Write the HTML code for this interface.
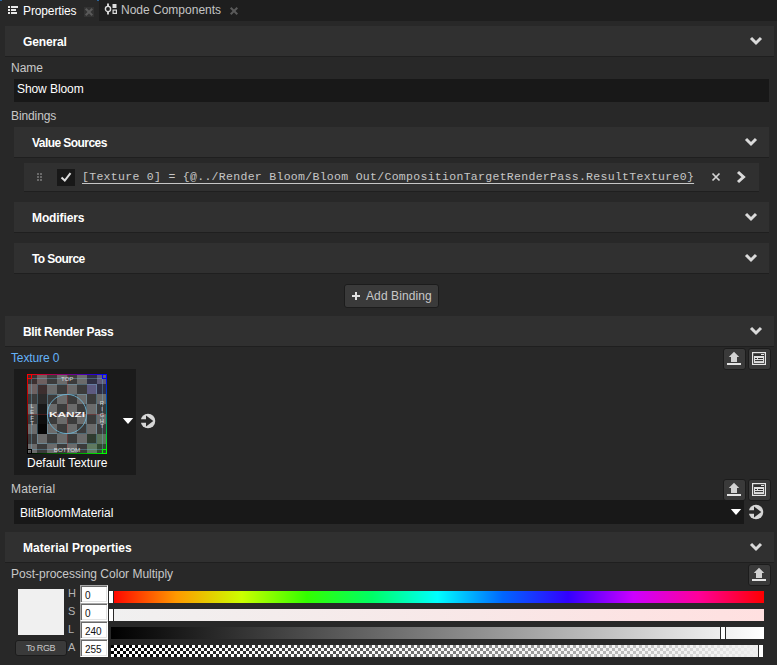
<!DOCTYPE html>
<html>
<head>
<meta charset="utf-8">
<title>Properties</title>
<style>
html,body{margin:0;padding:0;background:#282828;}
body{width:777px;height:665px;overflow:hidden;background:#282828;position:relative;
 font-family:"Liberation Sans",sans-serif;font-size:12px;color:#c8c8c8;}
.a{position:absolute;}
.t{position:absolute;white-space:nowrap;line-height:14px;height:14px;}
.hd{position:absolute;background:#303030;border-bottom:1px solid #1f1f1f;height:30px;}
.hd b{position:absolute;top:9px;line-height:14px;color:#ffffff;font-weight:bold;white-space:nowrap;}
.chev{position:absolute;width:14px;height:10px;}
.inp{position:absolute;background:#181818;}
.btn{position:absolute;box-sizing:border-box;background:#3a3a3a;border:1px solid #1c1c1c;border-radius:3px;}
.num{position:absolute;box-sizing:border-box;left:80px;width:28px;height:18px;background:#ffffff;
 border:1px solid;border-color:#a8a8a8 #ffffff #ffffff #a8a8a8;box-shadow:inset 1px 1px 0 #6a6a6a,inset -1px -1px 0 #e3e3e3;}
.num span{position:absolute;left:4px;top:5px;font-size:10px;line-height:10px;color:#111;}
.lab{position:absolute;left:68px;font-size:11px;line-height:12px;color:#b4b4b4;}
.bar{position:absolute;left:111px;width:653px;height:12px;}
.thumb{position:absolute;width:4px;height:12px;background:#ffffff;border-left:1px solid #282828;border-right:1px solid #282828;}
</style>
</head>
<body>

<!-- tab bar -->
<div class="a" style="left:0;top:0;width:777px;height:21px;background:#1e1e1e;"></div>
<div class="a" style="left:0px;top:0;width:99px;height:21px;background:#282828;"></div>
<div class="a" style="left:0;top:0;width:2px;height:1px;background:#2a7fd0;opacity:.7;"></div>
<div class="a" style="left:97px;top:0;width:2px;height:1px;background:#2a7fd0;opacity:.7;"></div>
<svg class="a" style="left:7px;top:5px;" width="12" height="10" viewBox="0 0 12 10">
 <g fill="#e8e8e8"><rect x="1" y="1" width="2" height="2"/><rect x="4" y="1" width="7" height="2"/>
 <rect x="1" y="4" width="2" height="2"/><rect x="4" y="4" width="5" height="2"/>
 <rect x="1" y="7" width="2" height="2"/><rect x="4" y="7" width="6" height="2"/></g>
</svg>
<div class="t" id="tProperties" style="letter-spacing:-0.12px;left:23px;top:4px;color:#ffffff;">Properties</div>
<div class="a" style="left:84px;top:7px;width:10px;height:10px;background:#333333;"></div>
<svg class="a" style="left:84px;top:7px;" width="10" height="10" viewBox="0 0 10 10"><path d="M1.7 1.7L8.3 8.3M8.3 1.7L1.7 8.3" stroke="#5a5a5a" stroke-width="2" fill="none"/></svg>
<svg class="a" style="left:104px;top:3px;" width="14" height="12" viewBox="0 0 14 12">
 <g fill="none" stroke="#dcdcdc"><circle cx="4" cy="6" r="2.6" stroke-width="1.4"/><path d="M4 0.6V3.4M4 8.6V11.4" stroke-width="1.9"/></g>
 <rect x="8.5" y="1" width="4" height="4" fill="#dcdcdc"/>
 <rect x="9.1" y="7.1" width="3.3" height="3.3" fill="none" stroke="#dcdcdc" stroke-width="1.2"/>
</svg>
<div class="t" id="tNode" style="left:121px;top:3px;color:#c4c4c4;">Node Components</div>
<svg class="a" style="left:229px;top:6px;" width="10" height="10" viewBox="0 0 10 10"><path d="M1.7 1.7L8.3 8.3M8.3 1.7L1.7 8.3" stroke="#5a5a5a" stroke-width="2" fill="none"/></svg>

<!-- General -->
<div class="hd" style="left:5px;top:26px;width:769px;"><b id="tGeneral" style="letter-spacing:-0.14px;left:18px;">General</b></div>
<svg class="chev" style="left:749px;top:36px;" viewBox="0 0 14 10"><path d="M2 2L7 7L12 2" stroke="#dadada" stroke-width="3" fill="none"/></svg>
<div class="t" id="tName" style="left:11px;top:61px;">Name</div>
<div class="inp" style="left:14px;top:79px;width:755px;height:23px;"></div>
<div class="t" id="tShow" style="letter-spacing:-0.08px;left:17px;top:82px;color:#ffffff;">Show Bloom</div>
<div class="t" id="tBindings" style="letter-spacing:-0.1px;left:11px;top:109px;">Bindings</div>

<!-- Value Sources -->
<div class="hd" style="left:14px;top:127px;width:755px;"><b id="tValue" style="letter-spacing:-0.56px;left:18px;">Value Sources</b></div>
<svg class="chev" style="left:744px;top:137px;" viewBox="0 0 14 10"><path d="M2 2L7 7L12 2" stroke="#dadada" stroke-width="3" fill="none"/></svg>

<div class="a" style="left:24px;top:163px;width:735px;height:28px;background:#303030;border-bottom:1px solid #1f1f1f;"></div>
<svg class="a" style="left:37px;top:173px;" width="5" height="8" viewBox="0 0 5 8"><g fill="#696969">
 <rect x="0" y="0" width="2" height="2"/><rect x="3" y="0" width="2" height="2"/>
 <rect x="0" y="3" width="2" height="2"/><rect x="3" y="3" width="2" height="2"/>
 <rect x="0" y="6" width="2" height="2"/><rect x="3" y="6" width="2" height="2"/></g></svg>
<div class="a" style="left:57px;top:169px;width:18px;height:17px;background:#181818;"></div>
<svg class="a" style="left:57px;top:168px;" width="18" height="18" viewBox="0 0 18 18"><path d="M4.5 9.5L7.8 12.6L13.5 5.2" stroke="#dcdcdc" stroke-width="2" fill="none"/></svg>
<div class="t" id="tMono" style="left:82px;top:170px;font-size:11.5px;letter-spacing:0.3px;font-family:'Liberation Mono',monospace;color:#c6c6c6;text-decoration:underline;text-underline-offset:3px;text-decoration-thickness:1px;">[Texture 0] = {@../Render Bloom/Bloom Out/CompositionTargetRenderPass.ResultTexture0}</div>
<svg class="a" style="left:711px;top:172px;" width="10" height="10" viewBox="0 0 10 10"><path d="M1.5 1.5L8.5 8.5M8.5 1.5L1.5 8.5" stroke="#d4d4d4" stroke-width="1.7" fill="none"/></svg>
<svg class="a" style="left:735px;top:170px;" width="12" height="14" viewBox="0 0 12 14"><path d="M3 2L8.5 7L3 12" stroke="#dadada" stroke-width="3" fill="none"/></svg>

<!-- Modifiers / To Source -->
<div class="hd" style="left:14px;top:202px;width:755px;"><b id="tMod" style="letter-spacing:-0.11px;left:18px;">Modifiers</b></div>
<svg class="chev" style="left:744px;top:212px;" viewBox="0 0 14 10"><path d="M2 2L7 7L12 2" stroke="#dadada" stroke-width="3" fill="none"/></svg>
<div class="hd" style="left:14px;top:243px;width:755px;"><b id="tToSrc" style="letter-spacing:-0.58px;left:18px;">To Source</b></div>
<svg class="chev" style="left:744px;top:253px;" viewBox="0 0 14 10"><path d="M2 2L7 7L12 2" stroke="#dadada" stroke-width="3" fill="none"/></svg>

<!-- Add Binding -->
<div class="btn" style="left:344px;top:284px;width:95px;height:24px;"></div>
<svg class="a" style="left:351px;top:291px;" width="10" height="10" viewBox="0 0 10 10"><path d="M5 1V9M1 5H9" stroke="#e0e0e0" stroke-width="2" fill="none"/></svg>
<div class="t" id="tAdd" style="left:366px;top:289px;color:#c8c8c8;letter-spacing:0.1px;">Add Binding</div>

<!-- Blit Render Pass -->
<div class="hd" style="left:5px;top:316px;width:769px;"><b id="tBlit" style="letter-spacing:-0.32px;left:18px;">Blit Render Pass</b></div>
<svg class="chev" style="left:749px;top:326px;" viewBox="0 0 14 10"><path d="M2 2L7 7L12 2" stroke="#dadada" stroke-width="3" fill="none"/></svg>
<div class="t" id="tTex0" style="letter-spacing:-0.13px;left:11px;top:351px;color:#64b2f8;">Texture 0</div>

<div class="btn" style="left:723px;top:348px;width:23px;height:22px;"></div>
<svg class="a" style="left:724px;top:349px;" width="21" height="20" viewBox="0 0 21 20"><path d="M10 2.7L15.2 8H13V13H7V8H4.8Z" fill="#d2d2d2"/><rect x="3" y="14" width="14" height="2" fill="#e4e4e4"/></svg>
<div class="btn" style="left:748px;top:348px;width:23px;height:22px;"></div>
<svg class="a" style="left:749px;top:349px;" width="21" height="20" viewBox="0 0 21 20"><rect x="3.6" y="3.6" width="12.8" height="11.8" fill="#2f2f2f" stroke="#e6e6e6" stroke-width="1.2"/><rect x="12" y="5" width="3" height="1" fill="#e6e6e6"/><rect x="5" y="7" width="10" height="7" fill="#e0e0e0"/><path d="M6 9.5H8M9 9.5H14M6 11.6H14" stroke="#2a2a2a" stroke-width="1" fill="none"/></svg>

<div class="a" style="left:14px;top:369px;width:122px;height:106px;background:#1b1b1b;"></div>
<svg class="a" id="thumbsvg" style="left:27px;top:374px;" width="80" height="80" viewBox="0 0 80 80">
<defs><linearGradient id="gT" x1="0" x2="1" y1="0" y2="0"><stop offset="0" stop-color="#ff0000"/><stop offset="1" stop-color="#0000ff"/></linearGradient><linearGradient id="gR" x1="0" x2="0" y1="0" y2="1"><stop offset="0" stop-color="#0000ff"/><stop offset="1" stop-color="#00ff00"/></linearGradient><linearGradient id="gB" x1="0" x2="1" y1="0" y2="0"><stop offset="0" stop-color="#000000"/><stop offset="1" stop-color="#00ff00"/></linearGradient><linearGradient id="gL" x1="0" x2="0" y1="0" y2="1"><stop offset="0" stop-color="#ff0000"/><stop offset="1" stop-color="#000000"/></linearGradient><radialGradient id="rR" cx="0" cy="0" r="1"><stop offset="0" stop-color="#ff2020" stop-opacity="0.22"/><stop offset="0.45" stop-color="#ff2020" stop-opacity="0.08"/><stop offset="1" stop-color="#ff2020" stop-opacity="0"/></radialGradient><radialGradient id="rB" cx="1" cy="0" r="1"><stop offset="0" stop-color="#3030ff" stop-opacity="0.30"/><stop offset="0.45" stop-color="#3030ff" stop-opacity="0.10"/><stop offset="1" stop-color="#3030ff" stop-opacity="0"/></radialGradient><radialGradient id="rG" cx="1" cy="1" r="1"><stop offset="0" stop-color="#20ff20" stop-opacity="0.30"/><stop offset="0.45" stop-color="#20ff20" stop-opacity="0.10"/><stop offset="1" stop-color="#20ff20" stop-opacity="0"/></radialGradient></defs>
<rect width="80" height="80" fill="#3b3b3b"/>
<path d="M10 0h10v10h-10zM30 0h10v10h-10zM50 0h10v10h-10zM70 0h10v10h-10zM0 10h10v10h-10zM20 10h10v10h-10zM40 10h10v10h-10zM60 10h10v10h-10zM10 20h10v10h-10zM30 20h10v10h-10zM50 20h10v10h-10zM70 20h10v10h-10zM0 30h10v10h-10zM20 30h10v10h-10zM40 30h10v10h-10zM60 30h10v10h-10zM10 40h10v10h-10zM30 40h10v10h-10zM50 40h10v10h-10zM70 40h10v10h-10zM0 50h10v10h-10zM20 50h10v10h-10zM40 50h10v10h-10zM60 50h10v10h-10zM10 60h10v10h-10zM30 60h10v10h-10zM50 60h10v10h-10zM70 60h10v10h-10zM0 70h10v10h-10zM20 70h10v10h-10zM40 70h10v10h-10zM60 70h10v10h-10z" fill="#6b6b6b"/>
<rect x="10" y="20" width="10" height="10" fill="#2c2c2c"/><rect x="10" y="30" width="10" height="10" fill="#191919"/><rect x="10" y="40" width="10" height="10" fill="#0e0e0e"/><rect x="10" y="50" width="10" height="10" fill="#060606"/>
<rect x="0" y="0" width="10" height="10" fill="#3b3030"/>
<rect x="10" y="0" width="10" height="10" fill="#6e6060"/>
<rect x="0" y="10" width="10" height="10" fill="#6e6262"/>
<rect x="10" y="10" width="10" height="10" fill="#3d2f2f"/>
<rect x="60" y="0" width="10" height="10" fill="#2f2f43"/>
<rect x="70" y="0" width="10" height="10" fill="#5f5b78"/>
<rect x="60" y="10" width="10" height="10" fill="#5d5a80"/>
<rect x="70" y="10" width="10" height="10" fill="#2f2f45"/>
<rect x="60" y="60" width="10" height="10" fill="#2f3b2f"/>
<rect x="70" y="60" width="10" height="10" fill="#5a725a"/>
<rect x="60" y="70" width="10" height="10" fill="#5f7a5f"/>
<rect x="70" y="70" width="10" height="10" fill="#304a30"/>
<g fill="none" stroke="#78bedc" stroke-opacity="0.35" stroke-width="1"><rect x="4.5" y="4.5" width="71" height="71"/><rect x="10.5" y="10.5" width="59" height="59"/><rect x="20.5" y="20.5" width="39" height="39"/></g>
<path d="M40.5 1V79M1 40.5H79" stroke="#c04040" stroke-opacity="0.3" stroke-width="1" fill="none"/>
<circle cx="40" cy="40" r="19.6" fill="none" stroke="#6fb6d6" stroke-opacity="0.85" stroke-width="1"/>
<rect x="0" y="0" width="80" height="1" fill="url(#gT)"/><rect x="79" y="0" width="1" height="80" fill="url(#gR)"/><rect x="0" y="79" width="80" height="1" fill="url(#gB)"/><rect x="0" y="0" width="1" height="80" fill="url(#gL)"/>
<g fill="none" stroke-width="1"><rect x="0.5" y="0.5" width="4" height="4" stroke="#ff0000"/><rect x="75.5" y="0.5" width="4" height="4" stroke="#0000ff"/><rect x="75.5" y="75.5" width="4" height="4" stroke="#00ff00"/><rect x="0.5" y="75.5" width="4" height="4" stroke="#000000"/></g>
<rect x="2" y="77" width="2" height="2" fill="#555"/>
<text x="40" y="43" text-anchor="middle" font-family="Liberation Sans, sans-serif" font-size="7" font-weight="bold" fill="#f0f0f0" textLength="36" lengthAdjust="spacingAndGlyphs">KANZI</text>
<text x="40.2" y="7.2" text-anchor="middle" font-family="Liberation Sans, sans-serif" font-size="6.2" fill="#e8e8e8" fill-opacity="0.9">TOP</text>
<text x="40" y="77.6" text-anchor="middle" font-family="Liberation Sans, sans-serif" font-size="6.2" fill="#e8e8e8" fill-opacity="0.9">BOTTOM</text>
<g font-family="Liberation Sans, sans-serif" font-size="6" fill="#e4e4e4" fill-opacity="0.85" text-anchor="middle"><text x="5.1" y="34">L</text><text x="5.1" y="39.8">E</text><text x="5.1" y="45.6">F</text><text x="5.1" y="51.4">T</text><text x="75" y="31.4">R</text><text x="75" y="37.1">I</text><text x="75" y="42.8">G</text><text x="75" y="48.5">H</text><text x="75" y="54.2">T</text></g>
</svg>
<div class="t" id="tDefTex" style="left:27px;top:456px;color:#ffffff;">Default Texture</div>
<svg class="a" style="left:122px;top:417px;" width="12" height="8" viewBox="0 0 12 8"><path d="M0.8 1H11.2L6 6.9Z" fill="#ffffff"/></svg>
<svg class="a" style="left:140px;top:413px;" width="16" height="16" viewBox="0 0 16 16"><circle cx="8" cy="8" r="7.25" fill="#d6d6d6"/><path d="M0 6.3H6V2.5L13.3 8L6 13.5V9.7H0Z" fill="#282828"/></svg>

<!-- Material -->
<div class="t" id="tMaterial" style="letter-spacing:0.2px;left:11px;top:482px;">Material</div>
<div class="btn" style="left:723px;top:479px;width:23px;height:22px;"></div>
<svg class="a" style="left:724px;top:480px;" width="21" height="20" viewBox="0 0 21 20"><path d="M10 2.7L15.2 8H13V13H7V8H4.8Z" fill="#d2d2d2"/><rect x="3" y="14" width="14" height="2" fill="#e4e4e4"/></svg>
<div class="btn" style="left:748px;top:479px;width:23px;height:22px;"></div>
<svg class="a" style="left:749px;top:480px;" width="21" height="20" viewBox="0 0 21 20"><rect x="3.6" y="3.6" width="12.8" height="11.8" fill="#2f2f2f" stroke="#e6e6e6" stroke-width="1.2"/><rect x="12" y="5" width="3" height="1" fill="#e6e6e6"/><rect x="5" y="7" width="10" height="7" fill="#e0e0e0"/><path d="M6 9.5H8M9 9.5H14M6 11.6H14" stroke="#2a2a2a" stroke-width="1" fill="none"/></svg>
<div class="inp" style="left:14px;top:500px;width:730px;height:24px;"></div>
<div class="t" id="tBBM" style="left:20px;top:506px;color:#ffffff;">BlitBloomMaterial</div>
<svg class="a" style="left:730px;top:508px;" width="12" height="8" viewBox="0 0 12 8"><path d="M0.8 1H11.2L6 6.9Z" fill="#ffffff"/></svg>
<svg class="a" style="left:748px;top:504px;" width="16" height="16" viewBox="0 0 16 16"><circle cx="8" cy="8" r="7.25" fill="#d6d6d6"/><path d="M0 6.3H6V2.5L13.3 8L6 13.5V9.7H0Z" fill="#282828"/></svg>

<!-- Material Properties -->
<div class="hd" style="left:5px;top:532px;width:769px;"><b id="tMatProp" style="letter-spacing:0.04px;left:18px;">Material Properties</b></div>
<svg class="chev" style="left:749px;top:542px;" viewBox="0 0 14 10"><path d="M2 2L7 7L12 2" stroke="#dadada" stroke-width="3" fill="none"/></svg>
<div class="t" id="tPost" style="left:11px;top:567px;">Post-processing Color Multiply</div>
<div class="btn" style="left:748px;top:564px;width:23px;height:22px;"></div>
<svg class="a" style="left:749px;top:565px;" width="21" height="20" viewBox="0 0 21 20"><path d="M10 2.7L15.2 8H13V13H7V8H4.8Z" fill="#d2d2d2"/><rect x="3" y="14" width="14" height="2" fill="#e4e4e4"/></svg>

<!-- colour editor -->
<div class="a" style="left:18px;top:589px;width:46px;height:46px;background:#f0f0f0;"></div>
<div class="btn" style="left:15px;top:640px;width:52px;height:16px;border-radius:3px;"></div>
<div class="t" id="tToRGB" style="left:26px;top:642px;font-size:9px;letter-spacing:-0.4px;line-height:12px;height:12px;color:#c8c8c8;">To RGB</div>

<div class="lab" id="lH" style="top:587px;">H</div>
<div class="lab" id="lS" style="top:605px;">S</div>
<div class="lab" id="lL" style="top:623px;">L</div>
<div class="lab" id="lA" style="top:641px;">A</div>
<div class="num" style="top:585px;"><span>0</span></div>
<div class="num" style="top:603px;"><span>0</span></div>
<div class="num" style="top:621px;"><span>240</span></div>
<div class="num" style="top:639px;"><span>255</span></div>

<div class="bar" style="top:591px;background:linear-gradient(to right,#ff0000 0%,#ff9900 10%,#ccff00 20%,#33ff00 30%,#00ff66 40%,#00ffff 50%,#0066ff 60%,#3300ff 70%,#cc00ff 80%,#ff0099 90%,#ff0000 100%);"></div>
<div class="bar" style="top:609px;background:linear-gradient(to right,#f0f0f0,#ffe0e0);"></div>
<div class="bar" style="top:627px;background:linear-gradient(to right,#000000,#ffffff);"></div>
<div class="bar" style="top:645px;background-color:#ffffff;background-image:conic-gradient(#fff 25%,#000 0 50%,#fff 0 75%,#000 0);background-size:6px 6px;"></div>
<div class="bar" style="top:645px;background:linear-gradient(to right,rgba(240,240,240,0),rgba(240,240,240,1));"></div>
<div class="thumb" style="left:108px;top:591px;"></div>
<div class="thumb" style="left:108px;top:609px;"></div>
<div class="thumb" style="left:720px;top:627px;"></div>
<div class="thumb" style="left:758px;top:645px;"></div>

</body>
</html>
